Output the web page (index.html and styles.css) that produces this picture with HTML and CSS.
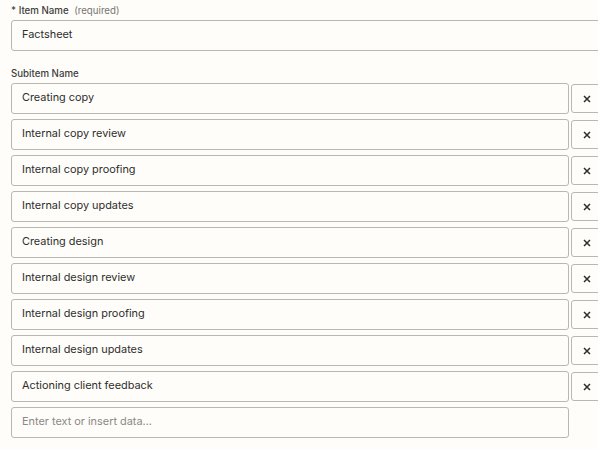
FILE: index.html
```html
<!DOCTYPE html>
<html lang="en">
<head>
  <meta charset="UTF-8">
  <meta name="viewport" content="width=device-width, initial-scale=1.0">
  <title>Subitems</title>
  <link rel="stylesheet" href="styles.css">
</head>
<body>
  <form class="form">
    <div class="field">
      <label class="label" for="itemName">* Item Name <span class="hint">(required)</span></label>
      <input class="input wide" id="itemName" type="text" value="Factsheet">
    </div>

    <div class="field">
      <label class="label">Subitem Name</label>
      <div class="rows">
        <div class="row"><input class="input" type="text" value="Creating copy"><button class="remove" type="button"><svg viewBox="0 0 8 8"><path d="M1 1L7 7M7 1L1 7"/></svg></button></div>
        <div class="row"><input class="input" type="text" value="Internal copy review"><button class="remove" type="button"><svg viewBox="0 0 8 8"><path d="M1 1L7 7M7 1L1 7"/></svg></button></div>
        <div class="row"><input class="input" type="text" value="Internal copy proofing"><button class="remove" type="button"><svg viewBox="0 0 8 8"><path d="M1 1L7 7M7 1L1 7"/></svg></button></div>
        <div class="row"><input class="input" type="text" value="Internal copy updates"><button class="remove" type="button"><svg viewBox="0 0 8 8"><path d="M1 1L7 7M7 1L1 7"/></svg></button></div>
        <div class="row"><input class="input" type="text" value="Creating design"><button class="remove" type="button"><svg viewBox="0 0 8 8"><path d="M1 1L7 7M7 1L1 7"/></svg></button></div>
        <div class="row"><input class="input" type="text" value="Internal design review"><button class="remove" type="button"><svg viewBox="0 0 8 8"><path d="M1 1L7 7M7 1L1 7"/></svg></button></div>
        <div class="row"><input class="input" type="text" value="Internal design proofing"><button class="remove" type="button"><svg viewBox="0 0 8 8"><path d="M1 1L7 7M7 1L1 7"/></svg></button></div>
        <div class="row"><input class="input" type="text" value="Internal design updates"><button class="remove" type="button"><svg viewBox="0 0 8 8"><path d="M1 1L7 7M7 1L1 7"/></svg></button></div>
        <div class="row"><input class="input" type="text" value="Actioning client feedback"><button class="remove" type="button"><svg viewBox="0 0 8 8"><path d="M1 1L7 7M7 1L1 7"/></svg></button></div>
        <div class="row"><input class="input" type="text" placeholder="Enter text or insert data..."></div>
      </div>
    </div>
  </form>
</body>
</html>
```

FILE: styles.css
```css
body {
  margin: 0;
  background: #fffdf9;
  color: #2d2e2e;
  font-family: Inter, "Noto Sans", sans-serif;
  overflow: hidden;
}
.form {
  width: 640px;
  padding: 4px 0 0 11px;
}
.field {
  display: flex;
  flex-direction: column;
  margin-bottom: 16px;
}
.label {
  font-size: 9.7px;
  font-weight: 500;
  color: #403f3e;
  line-height: 13px;
  margin-bottom: 3px;
}
.hint {
  font-weight: 400;
  color: #76746f;
  margin-left: 3px;
}
.rows {
  display: flex;
  flex-direction: column;
  gap: 5px;
}
.row {
  display: flex;
  align-items: center;
  gap: 2px;
}
.input {
  box-sizing: border-box;
  width: 558px;
  height: 31px;
  padding: 0 10px 4px;
  border: 1px solid #b9b7b1;
  border-radius: 3px;
  background: #fffdf9;
  color: #2d2e2e;
  font-family: inherit;
  font-size: 10.9px;
}
.input::placeholder {
  color: #8a8985;
}
.input.wide {
  width: 620px;
}
.remove {
  box-sizing: border-box;
  display: flex;
  align-items: center;
  justify-content: center;
  width: 32px;
  height: 29px;
  border: 1px solid #b9b7b1;
  border-radius: 3px;
  background: #fffdf9;
  padding: 0;
}
.remove svg {
  width: 8px;
  height: 8px;
  fill: none;
  stroke: #2d2e2e;
  stroke-width: 1.5;
}
```
